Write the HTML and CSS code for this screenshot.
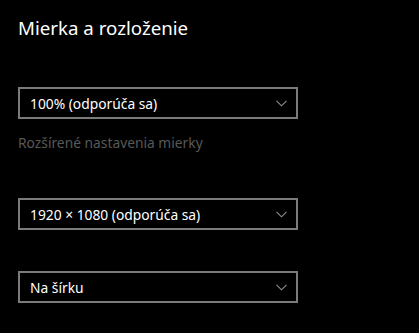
FILE: index.html
```html
<!DOCTYPE html>
<html lang="sk">
<head>
<meta charset="UTF-8" />
<meta name="viewport" content="width=device-width, initial-scale=1" />
<title>Mierka a rozloženie</title>
<link rel="stylesheet" href="styles.css">
</head>
<body>
<div class="panel">
  <h1>Mierka a rozloženie</h1>

  <div class="combo first">
    <span class="combo-text">100% (odporúča sa)</span>
    <svg class="chevron" width="11" height="7" viewBox="0 0 11 7"><path d="M0.5 0.8 L5.5 5.8 L10.5 0.8" /></svg>
  </div>
  <div class="link">Rozšírené nastavenia mierky</div>

  <div class="combo second">
    <span class="combo-text">1920 × 1080 (odporúča sa)</span>
    <svg class="chevron" width="11" height="7" viewBox="0 0 11 7"><path d="M0.5 0.8 L5.5 5.8 L10.5 0.8" /></svg>
  </div>

  <div class="combo third">
    <span class="combo-text">Na šírku</span>
    <svg class="chevron" width="11" height="7" viewBox="0 0 11 7"><path d="M0.5 0.8 L5.5 5.8 L10.5 0.8" /></svg>
  </div>
</div>
</body>
</html>
```

FILE: styles.css
```css
body {
  margin: 0;
  background: #000;
  color: #fff;
  font-family: 'Noto Sans', 'Open Sans', sans-serif;
}
.panel {
  padding: 14px 0 0 18px;
  width: 280px;
}
h1 {
  margin: 0;
  font-size: 18.7px;
  font-weight: 400;
  line-height: 28px;
}
.combo {
  box-sizing: border-box;
  height: 32px;
  border: 2px solid #7b7b7b;
  display: flex;
  align-items: center;
  justify-content: space-between;
  padding: 0 9px 0 10px;
  font-size: 13.8px;
}
.combo.first { margin-top: 45px; }
.combo.second { margin-top: 45px; }
.combo.third { margin-top: 41px; }
.chevron {
  fill: none;
  stroke: #909090;
  stroke-width: 1.1;
}
.link {
  margin-top: 14px;
  font-size: 13.8px;
  line-height: 20px;
  color: #585858;
}
```
